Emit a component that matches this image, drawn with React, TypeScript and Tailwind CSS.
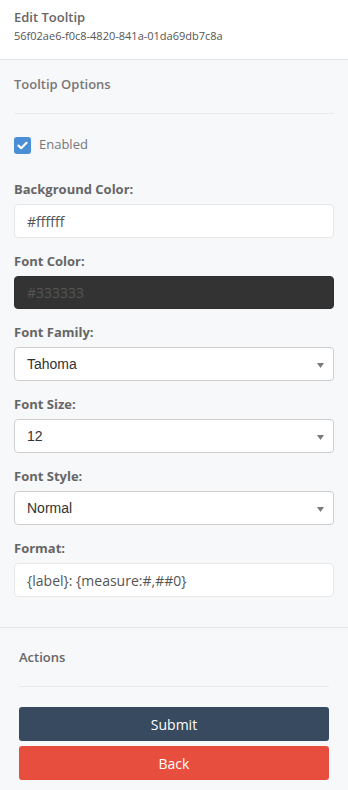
import React from 'react';

const labelCls = "block text-[13px] leading-5 font-bold text-[#666] mb-[5px]";
const inputCls = "w-full h-[34px] rounded-[4px] border border-[#e6e6e6] bg-white px-[12px] text-[14px] text-[#555] outline-none";

const Caret = () => (
  <svg width="7" height="5" viewBox="0 0 7 5" className="absolute right-[9px] top-[15px]">
    <path d="M0 0 L7 0 L3.5 5 Z" fill="#7a7a7a" />
  </svg>
);

const SelectBox: React.FC<{ value: string }> = ({ value }) => (
  <div className="relative w-full h-[34px] rounded-[4px] border border-[#cfcfcf] bg-white px-[12px] flex items-center text-[14px] text-[#333] [font-family:'Liberation_Sans',Arial,sans-serif]">
    {value}
    <Caret />
  </div>
);

const Field: React.FC<{ label: string; children: React.ReactNode }> = ({ label, children }) => (
  <div className="mb-[13px]">
    <label className={labelCls}>{label}</label>
    {children}
  </div>
);

export default function App() {
  return (
    <div className="w-[348px] min-h-[790px] bg-[#f7f8fa] [font-family:'Open_Sans',sans-serif]">
      <header className="bg-white border-b border-[#e3e5e8] px-[14px] pt-[8px] pb-[15px]">
        <h1 className="text-[13px] leading-[18px] font-semibold text-[#666]">Edit Tooltip</h1>
        <p className="mt-[2px] text-[11px] leading-4 text-[#555]">56f02ae6-f0c8-4820-841a-01da69db7c8a</p>
      </header>

      <section className="px-[14px] pt-[14px] pb-[17px] border-b border-[#e3e5e8]">
        <h2 className="text-[13px] leading-5 font-semibold text-[#777]">Tooltip Options</h2>
        <div className="mt-[19px] border-t border-[#e8eaed]" />
        <div className="mt-[21px] flex items-center h-5 gap-[8px]">
          <span className="w-[17px] h-[17px] rounded-[3px] bg-[#4a8fd6] flex items-center justify-center">
            <svg width="11" height="9" viewBox="0 0 11 9">
              <path d="M1.5 4.6 L4.2 7.2 L9.5 1.8" stroke="#fff" strokeWidth="2.2" fill="none" strokeLinecap="round" strokeLinejoin="round" />
            </svg>
          </span>
          <span className="text-[13px] text-[#777]">Enabled</span>
        </div>

        <div className="mt-[24px]">
          <Field label="Background Color:">
            <input className={inputCls} defaultValue="#ffffff" />
          </Field>
          <Field label="Font Color:">
            <input className="w-full h-[33px] rounded-[4px] border border-[#2e2e2e] bg-[#333333] px-[12px] text-[14px] text-[#555] outline-none" defaultValue="#333333" />
          </Field>
          <Field label="Font Family:">
            <SelectBox value="Tahoma" />
          </Field>
          <Field label="Font Size:">
            <SelectBox value="12" />
          </Field>
          <Field label="Font Style:">
            <SelectBox value="Normal" />
          </Field>
          <Field label="Format:">
            <input className={inputCls} defaultValue="{label}: {measure:#,##0}" />
          </Field>
        </div>
      </section>

      <section className="px-[19px] pt-[19px] pb-[10px]">
        <h2 className="text-[13px] leading-5 font-semibold text-[#666]">Actions</h2>
        <div className="mt-[19px] border-t border-[#e8eaed]" />
        <div className="mt-[20px] flex flex-col gap-[5px]">
          <button className="h-[34px] w-full rounded-[3px] bg-[#374a5f] text-white text-[14px]">Submit</button>
          <button className="h-[34px] w-full rounded-[3px] bg-[#e74e3e] text-white text-[14px]">Back</button>
        </div>
      </section>
    </div>
  );
}
